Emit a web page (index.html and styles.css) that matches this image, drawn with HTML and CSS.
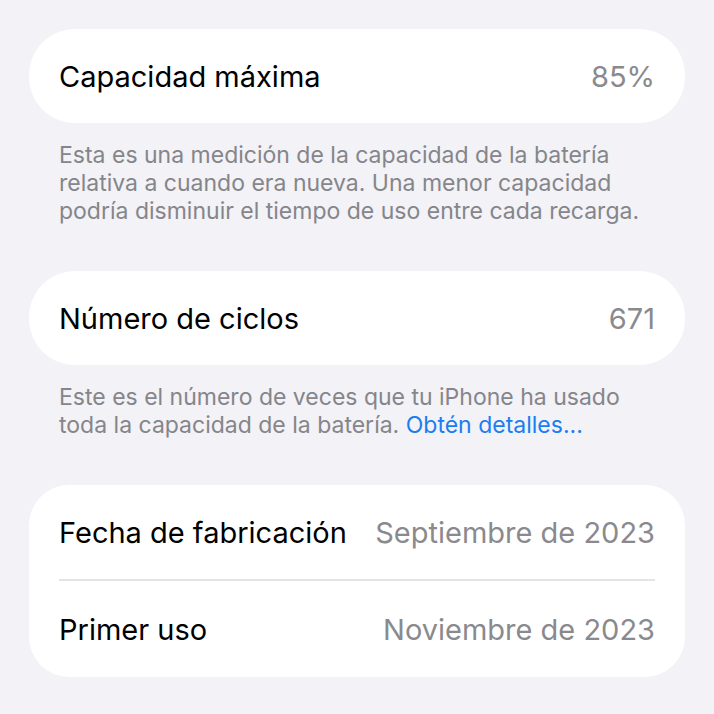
FILE: index.html
```html
<!DOCTYPE html>
<html lang="es">
<head>
    <meta charset="UTF-8">
    <meta name="viewport" content="width=device-width, initial-scale=1.0">
    <title>Estado de la batería</title>
    <link rel="stylesheet" href="styles.css">
</head>
<body>
    <div class="page">
        <section class="group">
            <div class="card">
                <div class="row">
                    <span class="label">Capacidad máxima</span>
                    <span class="value">85%</span>
                </div>
            </div>
            <p class="footer">Esta es una medición de la capacidad de la batería relativa a cuando era nueva. Una menor capacidad podría disminuir el tiempo de uso entre cada recarga.</p>
        </section>

        <section class="group">
            <div class="card">
                <div class="row">
                    <span class="label">Número de ciclos</span>
                    <span class="value">671</span>
                </div>
            </div>
            <p class="footer">Este es el número de veces que tu iPhone ha usado toda la capacidad de la batería. <a href="#">Obtén detalles...</a></p>
        </section>

        <section class="group">
            <div class="card list">
                <div class="row">
                    <span class="label">Fecha de fabricación</span>
                    <span class="value">Septiembre de 2023</span>
                </div>
                <div class="row">
                    <span class="label">Primer uso</span>
                    <span class="value">Noviembre de 2023</span>
                </div>
            </div>
        </section>
    </div>
</body>
</html>
```

FILE: styles.css
```css
body {
    margin: 0;
    background: #f2f2f7;
    font-family: Inter, "Noto Sans", sans-serif;
    -webkit-font-smoothing: antialiased;
}
.page {
    padding: 29px 29px 0 29px;
    display: flex;
    flex-direction: column;
}
.group {
    margin-bottom: 46px;
}
.card {
    background: #ffffff;
    border-radius: 46px;
    padding: 0 30px;
}
.card.list {
    border-radius: 40px;
}
.row {
    height: 94px;
    display: flex;
    align-items: center;
    justify-content: space-between;
    font-size: 29px;
}
.list .row {
    height: 94px;
}
.list .row + .row {
    height: 96px;
    border-top: 2px solid #e4e4e7;
}
.label {
    color: #000000;
}
.value {
    color: #8a8a8e;
}
.footer {
    margin: 18px 24px 0 30px;
    font-size: 23px;
    line-height: 28px;
    color: #85858a;
}
.footer a {
    color: #1a7ef2;
    text-decoration: none;
}
```
